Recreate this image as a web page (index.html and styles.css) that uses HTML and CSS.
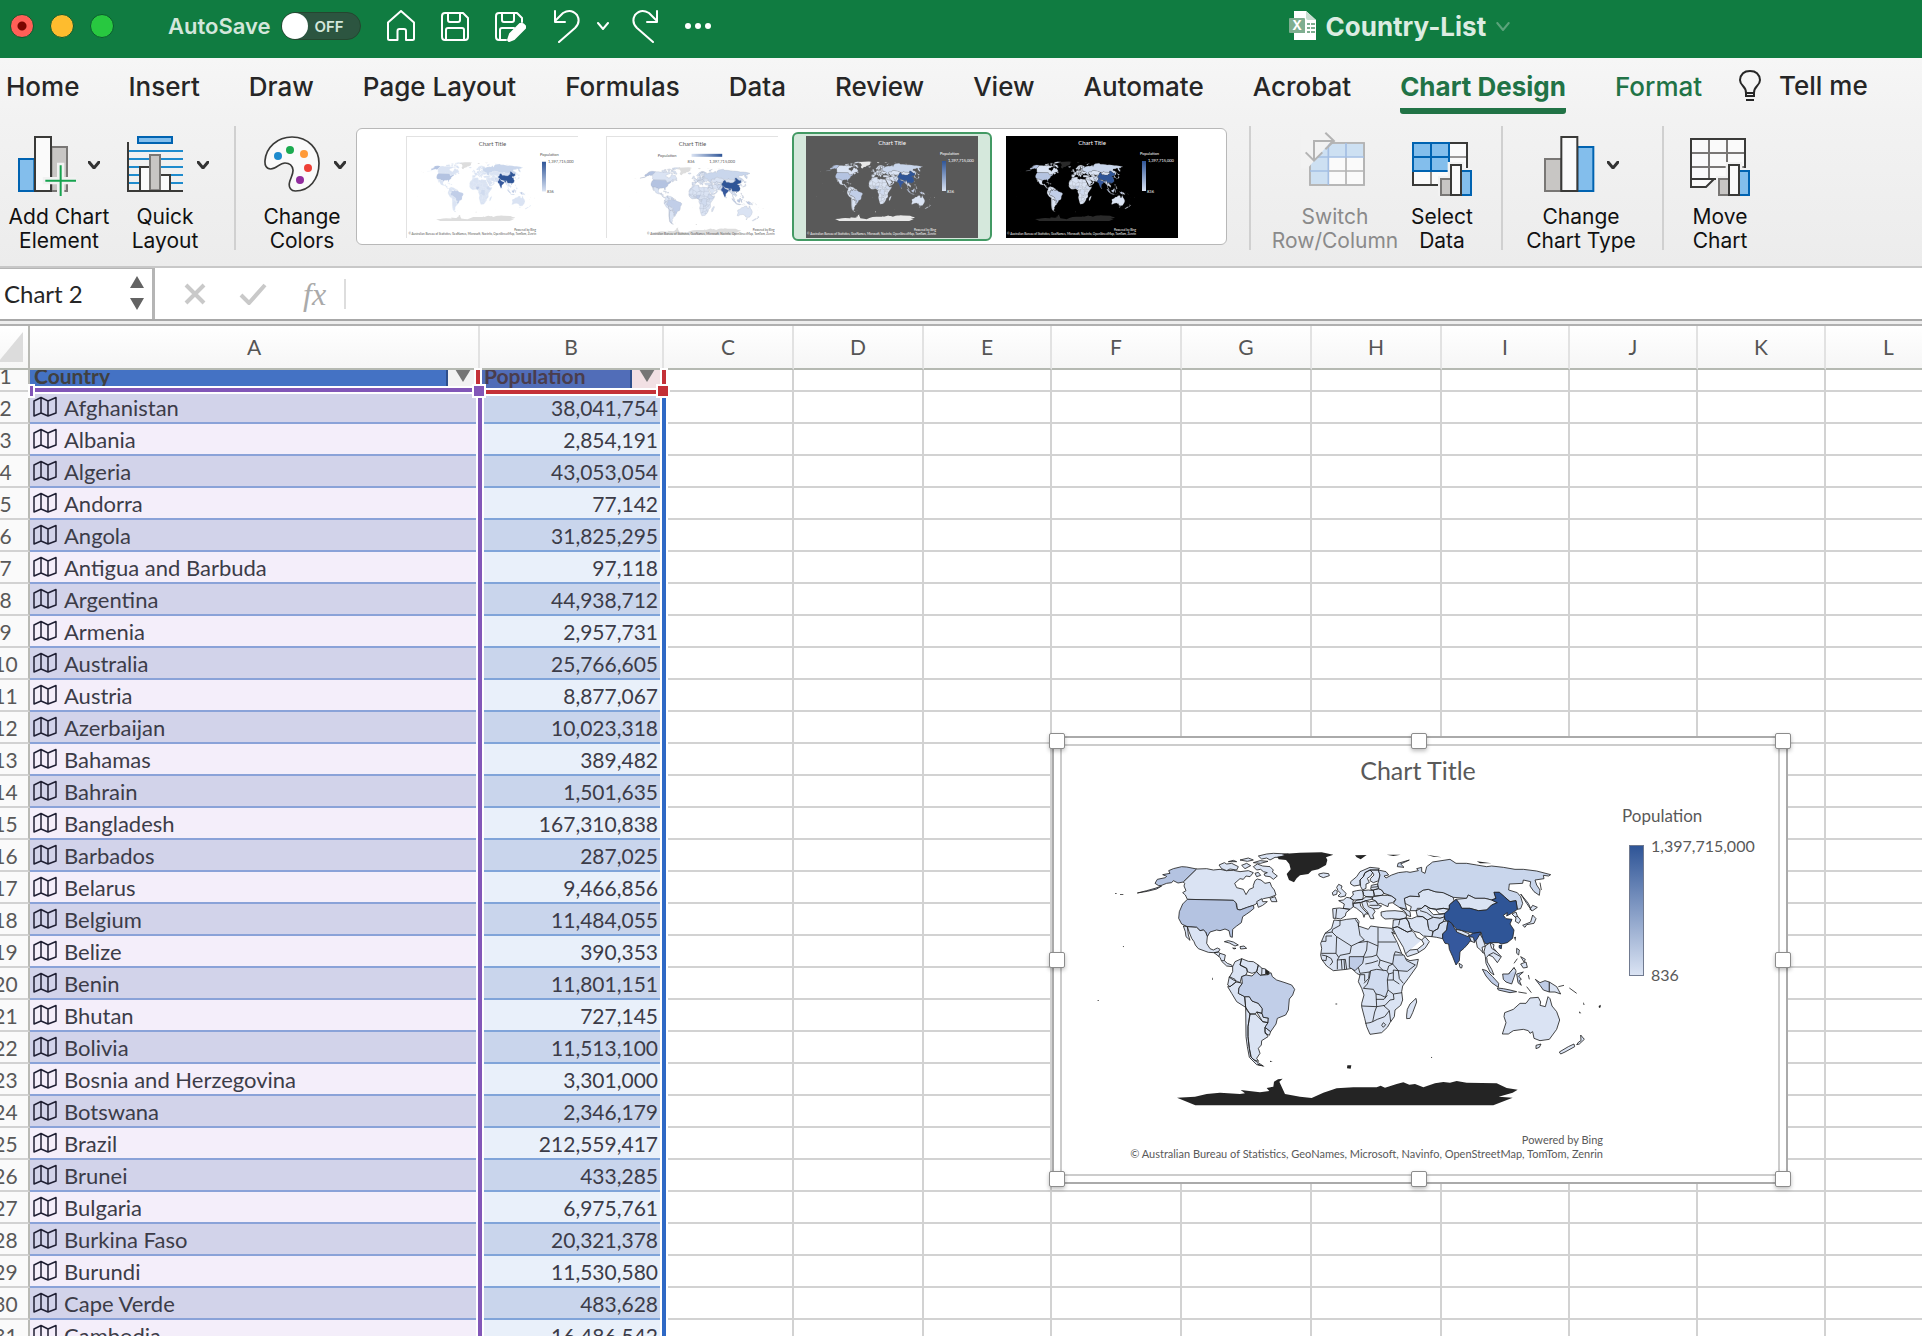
FILE: index.html
```html
<!DOCTYPE html>
<html lang="en">
<head>
<meta charset="utf-8">
<title>Country-List</title>
<link rel="stylesheet" href="styles.css">
</head>
<body>
<svg class="defs" aria-hidden="true">
  <symbol id="geo" viewBox="0 0 24 22"><path d="M1 5 8 1.500 15 5 23 1.500V17L15 20 8 17 1 20ZM8 1.500V17M15 5V20"/></symbol>
  <symbol id="chev" viewBox="0 0 12 8"><path d="M1 1 6 7 11 1"/></symbol>
  <linearGradient id="scaleV" x1="0" y1="0" x2="0" y2="1"><stop offset="0" stop-color="#2f5597"/><stop offset="1" stop-color="#dae3f3"/></linearGradient>
  <linearGradient id="scaleH"><stop offset="0" stop-color="#dae3f3"/><stop offset="1" stop-color="#2f5597"/></linearGradient>
  <symbol id="world" viewBox="159 390 1551 780">
    <g class="land">
      <path class="us" d="M470 447 440 441 425 440 400 446 386 452 390 460 368 464 380 469 376 473 352 478 345 490 356 497 365 496 380 490 395 488 400 482 414 489 430 486Z"/>
      <path class="us" d="M292 519 320 512 345 505 365 498 350 507 322 514Z"/>
      <path d="M470 447 500 446 520 450 540 448 560 452 580 451 600 455 625 452 640 458 630 470 618 468 610 478 600 476 584 490 590 503 610 508 618 524 628 508 640 503 640 496 645 482 652 477 663 480 675 490 690 487 695 500 703 510 708 525 690 532 670 536 655 545 648 552 640 556 622 562 600 570 592 568 590 552 580 541 442 538 436 525 428 518 438 512 432 498 434 490 430 486Z"/>
      <path d="M650 545 665 536 668 545 682 545 668 556 655 562ZM690 535 705 530 711 545 695 545ZM640 440 652 432 668 438 690 440 700 450 697 456 712 468 700 478 690 470 675 468 672 462 682 458 670 455 662 448 650 450ZM537 435 553 428 560 432 575 430 595 440 590 450 570 447 560 452 545 446ZM655 408 680 402 700 400 745 402 720 412 705 412 690 420 680 414 665 417ZM605 436 620 430 632 437 615 446ZM600 420 625 414 640 420 622 424ZM565 425 580 421 590 425ZM640 428 660 422 684 424 662 430ZM645 460 655 457 662 466 650 470Z"/>
      <path class="us" d="M442 538 580 541 588 548 590 562 592 568 600 570 622 562 640 556 642 565 630 575 620 582 608 590 604 608 590 618 578 628 577 652 571 650 567 632 555 627 540 632 530 630 510 636 502 650 497 636 490 630 480 632 470 622 442 620 425 612 416 595 418 575 428 552Z"/>
      <path d="M442 620 470 622 480 632 490 630 497 636 502 650 500 670 510 686 520 690 532 684 540 688 535 696 522 698 505 697 475 686 466 675 462 665 455 655 447 635ZM430 618 442 620 445 645 450 661 438 650 436 635ZM522 698 535 696 540 700 556 705 553 722 562 730 575 735 578 740 560 738 545 724 540 712ZM540 700 536 710M545 722 553 722M553 665 565 662 580 666 595 675 585 678 568 669ZM600 680 612 678 620 685 602 687ZM578 684 588 685 582 687Z"/>
      <path d="M578 740 585 725 605 716 600 735 620 745 622 755 618 765 605 770 600 788 592 784 580 780 568 772 578 755ZM605 716 625 724 640 725 655 735 650 755 636 760 622 755 620 745 600 735ZM655 735 666 745 677 747 677 763 660 766 650 755ZM666 745 665 764M568 770 585 778 588 786 570 800 563 795ZM563 800 570 800 588 786 600 788 607 790 597 804 595 820 614 830 617 862 590 845 575 820ZM614 830 628 830 636 843 655 850 667 866 666 880 650 876 646 882 630 882 622 872 617 862ZM650 876 666 880 670 892 685 894 684 908 668 905ZM630 882 646 882 668 905 684 908 675 922 675 935 684 950 665 962 664 975 655 985 660 1000 650 1015 656 1024 642 1020 632 1010 628 985 624 950 624 920ZM617 862 630 882 624 920 624 950 628 985 634 1012 645 1022 670 1038 650 1034 628 1012 622 980 618 950ZM675 922 692 935 688 946 675 940Z"/>
      <path class="br" d="M607 790 605 770 618 765 636 768 650 755 660 766 684 764 693 758 697 770 710 780 735 788 755 795 764 808 758 825 748 837 745 870 737 885 712 895 708 912 692 935 675 922 684 908 685 894 670 892 666 880 667 866 655 850 636 843 628 830 614 830 595 820 597 804Z"/>
      <path d="M836 462 850 459 866 461 868 467 850 473 838 468Z"/>
      <g transform="translate(810 360)">
        <path d="M122 125 140 110 150 95 180 82 208 85 205 90 180 90 165 98 160 110 150 120 150 135 132 138 122 132ZM150 120 160 110 165 98 180 90 188 98 182 108 172 115 178 128 168 132 168 145 158 150 152 140ZM180 90 205 90 210 105 206 122 190 128 180 122 182 115 192 105 188 98ZM84 168 92 160 84 152 80 142 86 133 96 138 94 146 108 160 106 168 92 171ZM67 158 76 150 82 154 80 163 69 166ZM68 206 88 204 120 208 108 218 106 228 92 237 80 235 70 235ZM80 207 77 235M86 182 100 180 110 172 120 174 130 180 128 190 130 200 120 208 100 205 103 192ZM120 174 130 165 128 155 140 152 155 150 160 158 160 170 158 178 142 180 130 180ZM158 152 175 150 190 152 193 165 188 171 168 170 160 164ZM140 180 158 178 168 170 188 171 185 178 168 182 150 188 130 190ZM130 190 150 187 152 198 162 210 174 222 165 222 162 232 158 220 140 205 130 200ZM155 187 168 182 178 186 196 182 205 195 215 198 205 206 190 206 195 215 188 225 192 236 182 236 172 215 160 202ZM170 184 175 200 190 206M178 196 205 196M190 170 215 166 232 166 245 168 258 178 248 188 236 190 234 200 224 196 212 190 205 192 196 182 186 178ZM190 150 205 146 215 150 222 160 215 166 193 168ZM184 136 203 132 206 146 190 150 182 148ZM184 142 204 140"/>
        <path d="M285 190 283 175 300 168 328 170 325 160 340 150 355 148 375 155 400 158 430 172 432 182 418 195 418 208 400 205 380 208 360 205 345 196 335 205 322 205 320 212 300 212 304 200ZM318 212 335 205 345 196 360 205 380 208 400 205 418 208 405 222 405 230 390 235 370 232 352 240 338 230 322 228ZM330 212 350 218 375 236M352 204 370 224 400 222M378 210 388 222 405 220M213 216 230 213 255 212 280 215 290 225 288 234 270 238 245 236 225 237 214 228ZM268 202 285 207 300 215 302 230 292 226 285 215ZM288 234 305 236 320 230 338 230 352 240 355 262 368 275 366 290 340 288 328 278 312 274 300 262 296 246ZM250 240 270 238 288 234 296 246 300 262 306 272 292 276 262 260 248 264ZM270 238 266 256M248 264 262 260 292 276 306 272 314 280 320 292 335 300 345 290 358 305 345 325 322 340 292 350 286 340 280 322 262 292ZM286 342 300 330 322 328 342 312 335 300M322 328 326 338"/>
        <path class="mid" d="M352 240 370 232 390 235 405 230 400 245 388 252 384 266 370 274 357 270ZM366 290 370 274 384 266 388 252 400 245 415 242 412 255 410 270 398 282 398 296 380 292Z"/>
        <path class="ru" d="M205 90 228 95 236 105 222 108 228 114 245 105 265 98 290 95 300 97 325 92 320 86 335 82 335 95 345 100 350 80 368 66 420 58 438 70 470 70 500 75 530 80 545 78 580 82 615 88 640 88 680 93 722 104 716 108 700 106 702 116 675 120 680 135 690 150 688 166 672 155 660 138 662 125 640 120 638 130 598 132 596 150 622 158 632 170 638 190 632 206 622 208 618 182 600 185 583 170 568 157 552 157 558 175 545 180 525 175 495 175 475 165 470 175 430 172 400 158 375 155 355 148 340 150 325 160 328 170 300 168 283 175 285 190 290 208 268 202 250 190 258 178 245 168 222 160 215 150 206 146 203 132 206 122 210 105Z"/>
        <path class="ru" d="M262 80 264 70 298 60 272 72 282 82ZM632 162 655 190 665 212 650 190Z"/>
        <path d="M438 178 470 175 475 165 495 175 525 175 545 180 562 188 545 195 530 210 505 212 480 205 455 205 448 190Z"/>
        <path class="cn" d="M438 178 448 190 455 205 480 205 505 212 530 210 545 195 562 188 545 180 558 175 552 157 568 157 583 170 600 185 618 182 622 208 605 220 590 228 592 218 580 226 588 236 606 238 600 252 612 270 608 295 592 308 575 312 565 308 545 308 528 312 518 300 514 278 490 280 440 268 425 250 405 240 402 222 418 208 418 195ZM567 317 575 315 574 326 568 324Z"/>
        <path class="in" d="M415 242 425 250 432 262 438 272 475 288 490 280 512 276 510 288 500 302 490 305 480 303 474 312 462 325 450 335 448 362 438 375 428 350 418 328 416 312 405 310 398 296 398 282 410 270 412 255Z"/>
        <path d="M438 268 455 272 478 282 474 290 440 276ZM478 290 490 292 494 308 484 304ZM498 302 510 282 518 296 526 318 516 322 520 340 512 330 502 322ZM526 318 540 308 552 314 550 324 560 335 574 350 562 368 556 360 548 350 536 345 530 352 532 366 545 388 552 405 540 396 528 370 526 350 522 335ZM540 308 545 325 560 335M536 345 550 338 572 350M447 370 457 376 455 384 450 383ZM606 222 618 216 622 228 632 240 626 250 616 244 618 234ZM616 230 624 230M638 256 662 246 668 225 678 236 672 250 650 254 645 262ZM660 208 668 196 682 202 668 212ZM690 128 694 150"/>
        <path class="id" d="M517 388 530 392 548 410 566 430 565 442 545 428 528 408ZM562 444 580 446 600 450 620 455 600 458 565 450ZM578 402 596 402 612 383 618 395 612 412 605 432 588 426 580 418ZM620 402 640 396 626 408 634 418 628 422 634 436 624 428ZM676 418 690 428 705 422 718 426 718 456 700 450 690 436ZM655 405 658 418M650 440 664 458M625 456 650 460"/>
        <path d="M718 426 740 440 752 462 735 456 718 456ZM745 440 762 436M778 444 800 460M596 402 612 383 618 392M620 325 628 330 626 345 620 340ZM632 350 646 358 642 366ZM632 372 648 366 652 382 640 384ZM612 370 622 356"/>
        <path d="M577 582 588 548 582 530 584 518 610 508 630 490 648 490 660 474 685 472 692 486 690 496 706 500 714 470 720 476 726 498 740 515 749 540 740 568 718 598 690 602 672 595 668 575 660 580 655 572 640 568 610 572 595 582ZM678 616 693 612 688 622 678 626ZM748 636 775 620 792 612 794 620 765 636 752 642ZM800 614 806 606 813 602 812 585 823 598 808 612Z"/>
        <path d="M72 240 90 242 110 238 140 235 147 245 145 258 175 268 182 258 210 262 245 265 254 282 245 276 262 308 275 340 285 355 300 362 325 358 320 380 295 415 278 438 275 455 278 480 272 496 255 510 253 530 240 548 232 562 215 578 180 583 170 560 164 535 155 500 155 490 162 465 155 445 145 425 150 405 140 400 125 385 110 388 90 390 70 392 50 378 35 358 32 345 35 325 32 310 45 280 65 265Z"/>
        <path class="id" d="M118 350 162 350 158 370 145 382 135 392 118 382Z"/>
        <path class="mid" d="M182 392 200 388 230 392 236 402 232 420 234 450 226 472 212 465 198 462 190 448 160 445 172 432 178 415ZM252 345 282 345 290 362 316 375 292 394 265 392 248 372Z"/>
        <path class="borders" d="M90 242 90 256 68 268 66 276 45 280M66 276 80 290 124 318 145 308 163 300 150 286 144 250 136 238M66 288H48V304H36M80 290 78 340H34M78 340 86 352M124 318 120 340 90 346M90 346 82 360 106 358 110 388M145 308 172 304 204 318V262M204 306H258M172 304 170 330 160 352M204 318 200 345 186 350 164 352M200 345 210 360 225 365 248 372M204 362 186 368 166 372M210 360 206 378 220 392M145 382 150 400 178 396 182 392M148 404H164V424M178 396 176 415 162 430M275 340 256 335 252 345M248 372 236 378 232 392M236 402 250 398 250 390 265 392 268 416 280 430M250 398V420L268 432M232 420 250 420M234 450 250 462 276 458M155 498 200 500 198 462M200 500 225 496 240 480 252 478 250 462M200 500 194 516 188 545 180 548 166 550M188 545 202 538 224 530 238 512 220 496M238 512 242 545M198 478 222 478 232 466M220 548 227 554 220 562 215 556ZM35 345 50 348 48 362 36 360M50 348 64 356 68 366 60 376M82 360 82 388M94 358 96 388M102 358 104 388"/>
        <path d="M290 525 292 508 300 492 318 475 320 486 308 518 300 535 290 536Z"/>
      </g>
    </g>
    <g class="nodata">
      <path d="M712 410 735 406 725 402 780 398 845 397 880 404 858 412 862 420 858 435 835 448 815 452 805 462 780 466 770 475 762 487 747 480 740 462 752 448 748 432 738 420 716 418Z"/>
      <path d="M411 1133 465 1130 500 1122 540 1118 600 1122 615 1120 602 1110 660 1117 688 1113 680 1104 700 1100 702 1085 714 1078 728 1076 718 1085 735 1122 780 1130 815 1134 850 1118 890 1105 940 1102 1010 1102 1022 1097 1035 1103 1070 1092 1090 1087 1108 1094 1125 1092 1150 1102 1185 1090 1210 1086 1230 1088 1250 1083 1280 1088 1370 1090 1400 1104 1433 1109 1418 1118 1376 1130 1418 1133 1360 1156 466 1156Z"/>
      <path d="M677 747 690 756 684 765 677 763ZM945 406 980 405 962 418 950 412ZM1040 404 1082 404 1060 408ZM1160 404 1205 412 1180 410ZM1310 424 1355 430 1320 430ZM1422 652 1428 650 1426 664ZM922 1036 934 1036 932 1046 921 1045ZM248 678 252 678 251 682ZM516 772 519 778 516 780ZM1174 1010 1177 1014 1173 1014ZM690 1022 698 1024 690 1026ZM887 850 893 852 887 854ZM1676 858 1682 854 1682 862 1677 864ZM1617 874 1624 880 1618 880ZM1630 846 1634 854 1630 854ZM173 840H176V843H173ZM240 523H250V525H240ZM225 519H230V521H225ZM650 1030 675 1040 655 1036Z"/>
    </g>
  </symbol>
</svg>

<header class="titlebar">
  <div class="lights"><button class="light close" aria-label="Close"></button><button class="light min" aria-label="Minimize"></button><button class="light max" aria-label="Zoom"></button></div>
  <label class="autosave">AutoSave <input type="checkbox" role="switch"><span class="switch"><span>OFF</span></span></label>
  <nav class="quick">
    <button aria-label="Home"><svg width="28" height="32" viewBox="0 0 28 32"><path d="M1 12.500 14 1 27 12.500V28.500Q27 30 25.500 30H19V21Q19 19 17 19H12.500Q10.500 19 10.500 21V30H2.500Q1 30 1 28.500Z"/></svg></button>
    <button aria-label="Save"><svg width="28" height="32" viewBox="0 0 28 32"><path d="M4 3H22L27 8V27Q27 30 24 30H4Q1 30 1 27V6Q1 3 4 3ZM7 3V10Q7 12 9 12H17Q19 12 19 10V3M5 30V20Q5 18 7 18H21Q23 18 23 20V30"/></svg></button>
    <button aria-label="Save as"><svg width="32" height="32" viewBox="0 0 32 32"><path d="M27 12V8L22 3H4Q1 3 1 6V27Q1 30 4 30H11M7 3V10Q7 12 9 12H17Q19 12 19 10V3M5 30V20Q5 18 7 18H19"/><path class="solid" d="M13 30 15 24 25 14Q28 13 30 16L30 18 19 29 14 31Z"/></svg></button>
    <button aria-label="Undo"><svg width="28" height="34" viewBox="0 0 28 34"><path d="M2 2V13H12M2 12 10 4Q18-1 24 6 28 13 22 19L6 33"/></svg></button>
    <button class="drop" aria-label="Undo history"><svg width="12" height="8"><use href="#chev"/></svg></button>
    <button aria-label="Redo"><svg width="28" height="34" viewBox="0 0 28 34"><path d="M26 2V13H16M26 12 18 4Q10-1 4 6 0 13 6 19L22 33"/></svg></button>
    <button class="more" aria-label="More"><svg width="26" height="6" viewBox="0 0 26 6"><circle cx="3" cy="3" r="3"/><circle cx="13" cy="3" r="3"/><circle cx="23" cy="3" r="3"/></svg></button>
  </nav>
  <h1 class="doc"><svg width="28" height="30" viewBox="0 0 28 30"><path fill="#fff" d="M5 0H17L27 9V29H5Z"/><path fill="#c9dfd2" d="M17 0 27 9H19Q17 9 17 7Z"/><path fill="#7fae90" d="M1 7H15Q16 7 16 8V22H1Q0 22 0 21V8Q0 7 1 7ZM18 12h3v2h-3zM22 12h4v2h-4zM18 16h3v2h-3zM22 16h4v2h-4zM18 20h3v2h-3zM22 20h4v2h-4z"/><text x="8" y="19" text-anchor="middle">X</text></svg>Country-List<svg class="chevdoc" width="16" height="9"><use href="#chev"/></svg></h1>
</header>

<section class="ribbon">
  <nav class="tabs">
    <a href="#home">Home</a><a href="#insert">Insert</a><a href="#draw">Draw</a><a href="#page">Page Layout</a><a href="#formulas">Formulas</a><a href="#data">Data</a><a href="#review">Review</a><a href="#view">View</a><a href="#automate">Automate</a><a href="#acrobat">Acrobat</a><a class="ctx active" href="#design">Chart Design</a><a class="ctx" href="#format">Format</a>
    <a class="tell" href="#tell"><svg width="22" height="32" viewBox="0 0 22 32"><path d="M7 23Q7 19 4 16 1 13 1 10 2 1 11 1T21 10Q21 13 18 16 15 19 15 23V26H7ZM7 23H15M7 30H15"/></svg>Tell me</a>
  </nav>
  <div class="tools">
    <button class="tool wide"><span class="ic"><svg width="58" height="60" viewBox="60 48 174 180"><path fill="#83beec" stroke="#0063b1" stroke-width="6" d="M63 117H109V213H63Z"/><path fill="#c8c6c4" stroke="#797775" stroke-width="6" d="M160 81H207V213H160Z"/><path fill="#fafafa" stroke="#3a3a38" stroke-width="6" d="M111 51H159V213H111Z"/><path stroke="#f2f2f2" stroke-width="22" d="M188 128V240M134 182H246"/><path stroke="#16a34f" stroke-width="6" d="M188 136V228M142 182H234"/></svg><svg class="chv" width="12" height="8"><use href="#chev"/></svg></span>Add Chart<br>Element</button>
    <button class="tool mid"><span class="ic"><svg width="56" height="60" viewBox="378 48 168 180"><path fill="#83beec" stroke="#0063b1" stroke-width="6" d="M411 51H513V69H411Z"/><path stroke="#1e8bcd" stroke-width="6" d="M384 93H546M384 117H546M384 141H546M384 165H546M384 189H546"/><path fill="#fafafa" stroke="#3a3a38" stroke-width="6" d="M417 141H447V213H417ZM477 165H507V213H477Z"/><path fill="#c8c6c4" stroke="#797775" stroke-width="6" d="M447 105H477V211H447Z"/><path fill="none" stroke="#3a3a38" stroke-width="6" d="M381 66V213H546"/></svg><svg class="chv" width="12" height="8"><use href="#chev"/></svg></span>Quick<br>Layout</button>
    <i class="sep"></i>
    <button class="tool mid"><span class="ic"><svg width="56" height="60" viewBox="792 48 168 180"><path fill="#fafafa" stroke="#3a3a38" stroke-width="5" d="M876 51C925 51 957 88 957 130 957 178 928 213 886 213 873 213 866 203 868 190 870 175 880 165 879 150 877 136 868 129 855 129 838 129 830 147 812 147 798 147 794 135 795 122 798 82 832 51 876 51Z"/><circle cx="834" cy="108" r="12" fill="#1e8bcd"/><circle cx="870" cy="90" r="12" fill="#1cab50"/><circle cx="912" cy="102" r="12" fill="#ff9a38"/><circle cx="924" cy="144" r="12" fill="#ee4037"/><circle cx="900" cy="180" r="12" fill="#912c9e"/></svg><svg class="chv" width="12" height="8"><use href="#chev"/></svg></span>Change<br>Colors</button>
    <div class="gallery">
      <button aria-label="Style 1"><svg class="thumb t1" viewBox="0 0 172 102"><use href="#world" x="9" y="25" width="122" height="61"/><text class="tt" x="86" y="9">Chart Title</text><text class="tl" x="134" y="19">Population</text><rect x="136" y="25" width="4" height="30" fill="url(#scaleV)"/><text class="tl" x="142" y="26">1,397,715,000</text><text class="tl" x="141" y="57">836</text><text class="tf" x="130" y="95">Powered by Bing</text><text class="tf" x="130" y="99">© Australian Bureau of Statistics, GeoNames, Microsoft, Navinfo, OpenStreetMap, TomTom, Zenrin</text></svg></button>
      <button aria-label="Style 2"><svg class="thumb t2" viewBox="0 0 172 102"><use href="#world" x="21" y="30" width="139" height="70"/><text class="tt" x="86" y="9">Chart Title</text><text class="tl" x="51" y="20">Population</text><rect x="85" y="17" width="31" height="3" fill="url(#scaleH)"/><text class="tl" x="81" y="26">836</text><text class="tl" x="103" y="26">1,397,715,000</text><text class="tf" x="169" y="95">Powered by Bing</text><text class="tf" x="169" y="99">© Australian Bureau of Statistics, GeoNames, Microsoft, Navinfo, OpenStreetMap, TomTom, Zenrin</text></svg></button>
      <button class="sel" aria-label="Style 3"><svg class="thumb t3" viewBox="0 0 172 102"><use href="#world" x="9" y="25" width="122" height="61"/><text class="tt" x="86" y="9">Chart Title</text><text class="tl" x="134" y="19">Population</text><rect x="136" y="25" width="4" height="30" fill="url(#scaleV)"/><text class="tl" x="142" y="26">1,397,715,000</text><text class="tl" x="141" y="57">836</text><text class="tf" x="130" y="95">Powered by Bing</text><text class="tf" x="130" y="99">© Australian Bureau of Statistics, GeoNames, Microsoft, Navinfo, OpenStreetMap, TomTom, Zenrin</text></svg></button>
      <button aria-label="Style 4"><svg class="thumb t4" viewBox="0 0 172 102"><use href="#world" x="9" y="25" width="122" height="61"/><text class="tt" x="86" y="9">Chart Title</text><text class="tl" x="134" y="19">Population</text><rect x="136" y="25" width="4" height="30" fill="url(#scaleV)"/><text class="tl" x="142" y="26">1,397,715,000</text><text class="tl" x="141" y="57">836</text><text class="tf" x="130" y="95">Powered by Bing</text><text class="tf" x="130" y="99">© Australian Bureau of Statistics, GeoNames, Microsoft, Navinfo, OpenStreetMap, TomTom, Zenrin</text></svg></button>
    </div>
    <i class="sep"></i>
    <button class="tool long" disabled><span class="ic"><svg width="60" height="60" viewBox="42 48 180 180"><path fill="#fafafa" stroke="#b3b3b3" stroke-width="5" d="M57 69H219V195H57Z"/><path fill="#cde0f2" d="M112 71H217V110H112V192H59V71Z"/><path fill="none" stroke="#b3b3b3" stroke-width="5" d="M112 153H219M165 111V195M57 69V195H219V69Z"/><path fill="none" stroke="#a3bee3" stroke-width="5" d="M57 153H112M57 111H219M112 69V195M165 69V111"/><path fill="#f2f2f2" d="M30 30H150L50 145H30Z"/><path fill="none" stroke="#b3b3b3" stroke-width="6" d="M103 38 129 63 103 88M129 63H69V122M44 97 69 122 94 97"/></svg></span>Switch<br>Row/Column</button>
    <button class="tool"><span class="ic"><svg width="60" height="60" viewBox="375 48 180 180"><path fill="#fafafa" stroke="#3a3a38" stroke-width="6" d="M378 69H540V195H378Z"/><path stroke="#797775" stroke-width="5" d="M488 111H537M432 153V192M486 153V192"/><path fill="#83beec" stroke="#0063b1" stroke-width="6" d="M378 69H486V153H378ZM378 111H486M432 69V153"/><path fill="#f2f2f2" d="M482 126H532V144H562V236H453V168H482Z"/><path fill="#c8c6c4" stroke="#797775" stroke-width="6" d="M462 177H492V225H462Z"/><path fill="#83beec" stroke="#0063b1" stroke-width="6" d="M522 153H552V225H522Z"/><path fill="#fafafa" stroke="#3a3a38" stroke-width="6" d="M492 135H522V225H492Z"/></svg></span>Select<br>Data</button>
    <i class="sep"></i>
    <button class="tool wide"><span class="ic"><svg width="51" height="60" viewBox="752 48 153 180"><path fill="#c8c6c4" stroke="#797775" stroke-width="6" d="M755 117H804V213H755Z"/><path fill="#83beec" stroke="#0063b1" stroke-width="6" d="M852 81H900V213H852Z"/><path fill="#fafafa" stroke="#3a3a38" stroke-width="6" d="M804 51H852V213H804Z"/></svg><svg class="chv" width="12" height="8"><use href="#chev"/></svg></span>Change<br>Chart Type</button>
    <i class="sep"></i>
    <button class="tool"><span class="ic"><svg width="60" height="60" viewBox="1200 48 180 180"><path fill="#fafafa" stroke="#3a3a38" stroke-width="6" d="M1203 57H1365V177H1272L1248 201H1203Z"/><path fill="none" stroke="#797775" stroke-width="6" d="M1206 99H1362M1206 141H1362M1257 60V174M1311 60V174"/><path stroke="#3a3a38" stroke-width="6" d="M1203 177H1275"/><path fill="#f2f2f2" d="M1307 126H1357V144H1390V236H1278V168H1307Z"/><path fill="#c8c6c4" stroke="#797775" stroke-width="6" d="M1287 177H1317V225H1287Z"/><path fill="#83beec" stroke="#0063b1" stroke-width="6" d="M1347 153H1377V225H1347Z"/><path fill="#fafafa" stroke="#3a3a38" stroke-width="6" d="M1317 135H1347V225H1317Z"/></svg></span>Move<br>Chart</button>
  </div>
</section>

<section class="formula">
  <div class="namebox"><input type="text" value="Chart 2" aria-label="Name box"><svg width="14" height="34" viewBox="0 0 14 34"><path d="M7 0 14 12H0ZM0 22H14L7 34Z"/></svg></div>
  <button class="fb" aria-label="Cancel"><svg width="24" height="22" viewBox="0 0 24 22"><path d="M3 2 21 20M21 2 3 20"/></svg></button>
  <button class="fb" aria-label="Enter"><svg width="28" height="22" viewBox="0 0 28 22"><path d="M2 12 10 20 26 2"/></svg></button>
  <button class="fb fx" aria-label="Insert function">fx</button>
  <input class="expr" type="text" aria-label="Formula">
</section>

<main class="sheet">
<table>
<colgroup><col class="rh"><col class="ca"><col class="cb"><col class="c"><col class="c"><col class="cn"><col class="c"><col class="c"><col class="c"><col class="cn"><col class="cn"><col class="cn"><col></colgroup>
<thead><tr><th class="corner"><svg width="24" height="30" viewBox="0 0 24 30"><path d="M24 0V30H0V29Z"/></svg></th><th>A</th><th>B</th><th>C</th><th>D</th><th>E</th><th>F</th><th>G</th><th>H</th><th>I</th><th>J</th><th>K</th><th>L</th></tr></thead>
<tbody>
<tr class="first"><th><div>1</div></th><td><div>Country<button aria-label="Filter country"></button></div></td><td><div>Population<button class="pink" aria-label="Filter population"></button></div></td><td><td><td><td><td><td><td><td><td><td></tr>
<tr><th>2<td><svg><use href="#geo"/></svg>Afghanistan<td>38,041,754<td><td><td><td><td><td><td><td><td><td>
<tr><th>3<td><svg><use href="#geo"/></svg>Albania<td>2,854,191<td><td><td><td><td><td><td><td><td><td>
<tr><th>4<td><svg><use href="#geo"/></svg>Algeria<td>43,053,054<td><td><td><td><td><td><td><td><td><td>
<tr><th>5<td><svg><use href="#geo"/></svg>Andorra<td>77,142<td><td><td><td><td><td><td><td><td><td>
<tr><th>6<td><svg><use href="#geo"/></svg>Angola<td>31,825,295<td><td><td><td><td><td><td><td><td><td>
<tr><th>7<td><svg><use href="#geo"/></svg>Antigua and Barbuda<td>97,118<td><td><td><td><td><td><td><td><td><td>
<tr><th>8<td><svg><use href="#geo"/></svg>Argentina<td>44,938,712<td><td><td><td><td><td><td><td><td><td>
<tr><th>9<td><svg><use href="#geo"/></svg>Armenia<td>2,957,731<td><td><td><td><td><td><td><td><td><td>
<tr><th>10<td><svg><use href="#geo"/></svg>Australia<td>25,766,605<td><td><td><td><td><td><td><td><td><td>
<tr><th>11<td><svg><use href="#geo"/></svg>Austria<td>8,877,067<td><td><td><td><td><td><td><td><td><td>
<tr><th>12<td><svg><use href="#geo"/></svg>Azerbaijan<td>10,023,318<td><td><td><td><td><td><td><td><td><td>
<tr><th>13<td><svg><use href="#geo"/></svg>Bahamas<td>389,482<td><td><td><td><td><td><td><td><td><td>
<tr><th>14<td><svg><use href="#geo"/></svg>Bahrain<td>1,501,635<td><td><td><td><td><td><td><td><td><td>
<tr><th>15<td><svg><use href="#geo"/></svg>Bangladesh<td>167,310,838<td><td><td><td><td><td><td><td><td><td>
<tr><th>16<td><svg><use href="#geo"/></svg>Barbados<td>287,025<td><td><td><td><td><td><td><td><td><td>
<tr><th>17<td><svg><use href="#geo"/></svg>Belarus<td>9,466,856<td><td><td><td><td><td><td><td><td><td>
<tr><th>18<td><svg><use href="#geo"/></svg>Belgium<td>11,484,055<td><td><td><td><td><td><td><td><td><td>
<tr><th>19<td><svg><use href="#geo"/></svg>Belize<td>390,353<td><td><td><td><td><td><td><td><td><td>
<tr><th>20<td><svg><use href="#geo"/></svg>Benin<td>11,801,151<td><td><td><td><td><td><td><td><td><td>
<tr><th>21<td><svg><use href="#geo"/></svg>Bhutan<td>727,145<td><td><td><td><td><td><td><td><td><td>
<tr><th>22<td><svg><use href="#geo"/></svg>Bolivia<td>11,513,100<td><td><td><td><td><td><td><td><td><td>
<tr><th>23<td><svg><use href="#geo"/></svg>Bosnia and Herzegovina<td>3,301,000<td><td><td><td><td><td><td><td><td><td>
<tr><th>24<td><svg><use href="#geo"/></svg>Botswana<td>2,346,179<td><td><td><td><td><td><td><td><td><td>
<tr><th>25<td><svg><use href="#geo"/></svg>Brazil<td>212,559,417<td><td><td><td><td><td><td><td><td><td>
<tr><th>26<td><svg><use href="#geo"/></svg>Brunei<td>433,285<td><td><td><td><td><td><td><td><td><td>
<tr><th>27<td><svg><use href="#geo"/></svg>Bulgaria<td>6,975,761<td><td><td><td><td><td><td><td><td><td>
<tr><th>28<td><svg><use href="#geo"/></svg>Burkina Faso<td>20,321,378<td><td><td><td><td><td><td><td><td><td>
<tr><th>29<td><svg><use href="#geo"/></svg>Burundi<td>11,530,580<td><td><td><td><td><td><td><td><td><td>
<tr><th>30<td><svg><use href="#geo"/></svg>Cape Verde<td>483,628<td><td><td><td><td><td><td><td><td><td>
<tr><th>31<td><svg><use href="#geo"/></svg>Cambodia<td>16,486,542<td><td><td><td><td><td><td><td><td><td>
</tbody>
</table>
<div class="mark purple-h"></div><div class="mark red-h"></div><div class="mark red-v r1"></div><div class="mark red-v r2"></div><div class="mark purple-v"></div><div class="mark blue-v"></div>
<div class="mark knob k0"></div><div class="mark knob k1"></div><div class="mark knob k2"></div>
<figure class="chart">
  <div class="plotbox">
    <figcaption>Chart Title</figcaption>
    <div class="plot">
      <svg class="map" viewBox="0 0 517 260" role="img" aria-label="World population map"><use href="#world" width="517" height="260"/></svg>
      <div class="legend"><p>Population</p><div class="scale"><i></i><div><span>1,397,715,000</span><span>836</span></div></div></div>
    </div>
    <div class="credit">Powered by Bing<br><span>© Australian Bureau of Statistics, GeoNames, Microsoft, Navinfo, OpenStreetMap, TomTom, Zenrin</span></div>
  </div>
  <b class="h t l"></b><b class="h t m"></b><b class="h t r"></b><b class="h c l"></b><b class="h c r"></b><b class="h b l"></b><b class="h b m"></b><b class="h b r"></b>
</figure>
</main>
</body>
</html>
```
FILE: styles.css
```css
* { box-sizing: border-box; }
body { margin: 0; height: 100vh; display: flex; flex-direction: column; overflow: hidden; font-family: Inter, "Liberation Sans", sans-serif; color: #262626; background: #fff; }
button { border: 0; background: none; padding: 0; font: inherit; color: inherit; }
.defs { position: absolute; width: 0; height: 0; }
#chev path { fill: none; stroke: currentColor; stroke-width: var(--cw, 2); stroke-linecap: round; }
#geo path { fill: none; stroke: #1f1f33; stroke-width: 1.5; stroke-linejoin: round; }

/* world map */
.land { fill: #dae3f3; stroke: var(--line, #222); stroke-width: 2.5; stroke-linejoin: round; }
.land .us { fill: #b4c3e1; }
.land .br { fill: #c1cee8; }
.land .ru { fill: #c9d6ec; }
.land .mid { fill: #d0dbef; }
.land .id { fill: #bfcce6; }
.land .in { fill: #35589d; }
.land .cn { fill: #2f5597; }
.land .borders { fill: none; }
.nodata { fill: var(--none, #242424); }

/* title bar */
.titlebar { flex: none; height: 58px; padding: 0 10px 6px; display: flex; align-items: center; background: #107c41; color: #fff; }
.lights { display: flex; gap: 16px; }
.light { width: 24px; height: 24px; border-radius: 50%; border: 1px solid #0b5a2f; }
.close { background: radial-gradient(circle, #7a0500 4px, #ff5f57 5px); }
.min { background: #febc2e; }
.max { background: #28c840; }
.autosave { margin-left: 54px; display: flex; align-items: center; gap: 10px; font-size: 22px; font-weight: 600; color: #d3e7db; }
.autosave input { position: absolute; opacity: 0; }
.switch { width: 80px; height: 28px; border-radius: 14px; background: #2c5540; border: 1px solid #24462f; display: flex; align-items: center; gap: 7px; font-size: 15px; }
.switch::before { content: ""; width: 26px; height: 26px; border-radius: 50%; background: #fff; }
.quick { display: flex; align-items: center; margin-left: 26px; gap: 26px; }
.quick button { display: flex; }
.quick path { fill: none; stroke: #fff; stroke-width: 2; stroke-linejoin: round; stroke-linecap: round; }
.quick .solid, .quick circle { fill: #fff; }
.quick .drop { margin: 0 -4px 0 -10px; }
.doc { margin: 0 0 0 578px; display: flex; align-items: center; gap: 9px; font-size: 26px; font-weight: 700; color: #dcece2; }
.doc text { font-size: 13px; fill: #fff; }
.chevdoc { color: #5aa37a; }

/* ribbon */
.ribbon { flex: none; height: 210px; background: linear-gradient(#f6f6f6, #f2f2f2 30%, #ececec); border-bottom: 2px solid #c8c8c8; }
.tabs { height: 66px; padding: 0 6px; display: flex; gap: 49px; font-size: 26px; font-weight: 500; line-height: 58px; white-space: nowrap; }
.tabs a { color: inherit; text-decoration: none; height: 56px; }
.tabs .ctx { color: #217346; }
.tabs .active { font-weight: 700; border-bottom: 6px solid #217346; border-radius: 3px; }
.tabs .tell { display: flex; align-items: center; gap: 18px; margin-left: -12px; }
.tell path { fill: none; stroke: #262626; stroke-width: 2; }
.tools { display: flex; height: 126px; align-items: flex-start; }
.tool { width: 74px; padding-top: 12px; font-size: 21px; line-height: 24px; color: #111; display: block; white-space: nowrap; text-align: center; flex: none; }
.tool.wide { width: 118px; }
.tool.mid { width: 94px; }
.tool.long { width: 130px; margin-right: 5px; color: #8a8a8a; }
.ic { display: flex; justify-content: center; align-items: center; gap: 12px; height: 60px; margin-bottom: 9px; }
.mid .ic { gap: 14px; padding-left: 6px; }
.ic svg { overflow: visible; flex: none; }
.ic > svg:first-child { overflow: hidden; }
.long .ic > svg:first-child { overflow: visible; }
.chv { color: #333; margin-bottom: 2px; --cw: 3; }
.sep { flex: none; width: 2px; height: 124px; background: #d0d0d0; margin: 2px 19px 0 22px; }
.gallery { flex: none; width: 871px; height: 117px; margin: 4px 0 0 7px; padding: 3px 0 3px 35px; background: #fff; border: 1px solid #b8b8b8; border-radius: 6px; display: grid; grid-template-columns: repeat(4, 200px); }
.gallery button { display: flex; justify-content: center; align-items: center; border-radius: 6px; border: 2px solid transparent; overflow: hidden; }
.gallery .sel { background: #d5e8dc; border-color: #439a64; }
.thumb { width: 172px; height: 102px; font-family: Lato, sans-serif; fill: #555; }
.tt { font-size: 6px; text-anchor: middle; }
.tl { font-size: 4px; }
.tf { font-size: 3px; text-anchor: end; }
.t1, .t2 { border: solid #e2e2e2; border-width: 1px 0 0 1px; --none: #ddd; }
.t1 { --line: #eef2fa; }
.t2 { --line: #99a0b5; }
.t3, .t4 { --line: #777; fill: #fff; }
.t3 { background: #595959; --none: #e8e8e8; }
.t4 { background: #000; --none: #2a2a2a; }

/* formula bar */
.formula { flex: none; height: 58px; display: flex; align-items: center; background: #fff; border-bottom: 2px solid #b0b0b0; box-shadow: inset 0 -3px #eee, inset 0 -5px #a8a8a8; padding-bottom: 5px; }
.namebox { width: 155px; height: 51px; border-right: 3px solid #b5b5b5; border-top: 1px solid #b5b5b5; display: flex; align-items: center; padding: 0 8px 2px 4px; }
.namebox input { width: 126px; flex: none; border: 0; padding: 0; font: 24px Lato, sans-serif; color: #262626; background: none; }
.namebox path { fill: #636363; }
.fb { margin-left: 28px; display: flex; }
.fb + .fb { margin-left: 32px; }
.fb path { fill: none; stroke: #c9c9c9; stroke-width: 4; }
.fb.fx { font: italic 32px/32px "Liberation Serif", serif; color: #aaa; margin-right: 18px; padding-left: 4px; }
.expr { flex: 1; height: 30px; border: 0; border-left: 2px solid #ddd; padding: 0 10px; background: none; }

/* sheet */
.sheet { flex: 1; min-height: 0; position: relative; overflow: hidden; font-family: Lato, "Liberation Sans", sans-serif; }
table { width: calc(100% + 48px); margin-left: -17px; table-layout: fixed; border-collapse: separate; border-spacing: 0; font-size: 21px; color: #3c3c48; }
.rh { width: 47px; } .ca { width: 450px; } .cb { width: 184px; } .c { width: 130px; } col.cn { width: 128px; }
th, td { padding: 2px 0 0; height: 32px; line-height: 28px; white-space: nowrap; overflow: hidden; border: solid #d2d2d2; border-width: 0 2px 2px 0; }
tr { height: 32px; }
th { font-weight: 400; color: #595959; }
thead th { height: 44px; padding: 0; line-height: 38px; border-bottom-color: #b5b9b2; border-right-color: #e2e2e2; background: linear-gradient(#fff, #f6f6f6); color: #555; }
thead .corner { border-right-color: #b9bab5; text-align: right; padding-right: 5px; line-height: 0; }
.corner path { fill: #dcdcdc; }
tbody th { border-right-color: #b9bab5; background: #fafafa; }
td:nth-child(2) { background: #f4eefa; border-bottom-color: #8aa2d8; font-size: 22px; }
td:nth-child(3) { background: #e9f0fa; border-bottom-color: #80a4d9; text-align: right; padding-right: 4px; }
tr:nth-child(even) td:nth-child(2) { background: #d2d3ea; }
tr:nth-child(even) td:nth-child(3) { background: #c9d5ec; }
td svg { width: 24px; height: 22px; margin: 0 7px 0 3px; vertical-align: -2px; }
.first, .first th, .first td { height: 22px; padding-top: 0; }
.first div { height: 20px; display: flex; align-items: flex-end; justify-content: space-between; overflow: hidden; line-height: 28px; }
.first th div { justify-content: center; }
tr.first td:nth-child(2) { background: #4472c4; font-weight: 700; font-size: 21px; color: #404040; padding: 0 0 0 4px; }
tr.first td:nth-child(3) { background: #516db8; font-weight: 700; color: #4a3d4d; padding: 0 0 0 4px; }
.first button { width: 32px; height: 30px; background: #f2f2f2; border-left: 2px solid #2f4f8c; display: flex; align-items: center; justify-content: center; }
.first button.pink { background: #f2e0e4; }
.first button::before { content: ""; border: 8px solid transparent; border-top: 13px solid #757575; border-bottom: 0; }

/* range outlines */
.mark { position: absolute; outline: 2px solid #fff; }
.purple-h { left: 32px; width: 446px; top: 62px; height: 4px; background: #8257b8; }
.red-h { left: 484px; width: 180px; top: 64px; height: 4px; background: #c43138; }
.red-v { top: 44px; height: 22px; width: 4px; background: #c43138; }
.r1 { left: 476px; } .r2 { left: 662px; }
.purple-v { left: 478px; top: 66px; bottom: 0; width: 4px; background: #8257b8; }
.blue-v { left: 662px; top: 68px; bottom: 0; width: 4px; background: #2f69c5; }
.knob { width: 10px; height: 10px; top: 60px; }
.k0 { left: 30px; width: 3px; background: #8257b8; }
.k1 { left: 474px; background: #8257b8; }
.k2 { left: 658px; background: #c43138; }

/* chart object */
.chart { position: absolute; left: 1052px; top: 410px; width: 736px; height: 448px; margin: 0; padding: 6px; border: 2px solid #aaa; background: #fff; color: #595959; }
.plotbox { height: 100%; border: 2px solid #ccc; display: flex; flex-direction: column; }
figcaption { text-align: center; font-size: 25px; line-height: 30px; margin-top: 9px; padding-right: 4px; }
.plot { display: flex; margin: 21px 0 0 31px; }
.map { width: 517px; height: 260px; margin-top: 44px; flex: none; }
.legend { margin-left: 12px; font-size: 17px; line-height: 20px; }
.legend p { margin: 0 0 19px; }
.scale { display: flex; gap: 7px; font-size: 16px; }
.scale i { width: 15px; height: 131px; margin-left: 7px; background: linear-gradient(#2f5597, #dae3f3); border: 1px solid #707a90; }
.scale div { display: flex; flex-direction: column; justify-content: space-between; margin: -9px 0; }
.credit { font-size: 11px; line-height: 14px; text-align: right; width: 541px; margin-top: 23px; }
.h { position: absolute; width: 16px; height: 16px; background: #fff; border: 1px solid #8c8c8c; border-radius: 2px; box-shadow: 0 2px 4px #0004; }
.h.t { top: -5px; } .h.c { top: 214px; } .h.b { bottom: -5px; }
.h.l { left: -5px; } .h.m { left: 357px; } .h.r { right: -5px; }
```
